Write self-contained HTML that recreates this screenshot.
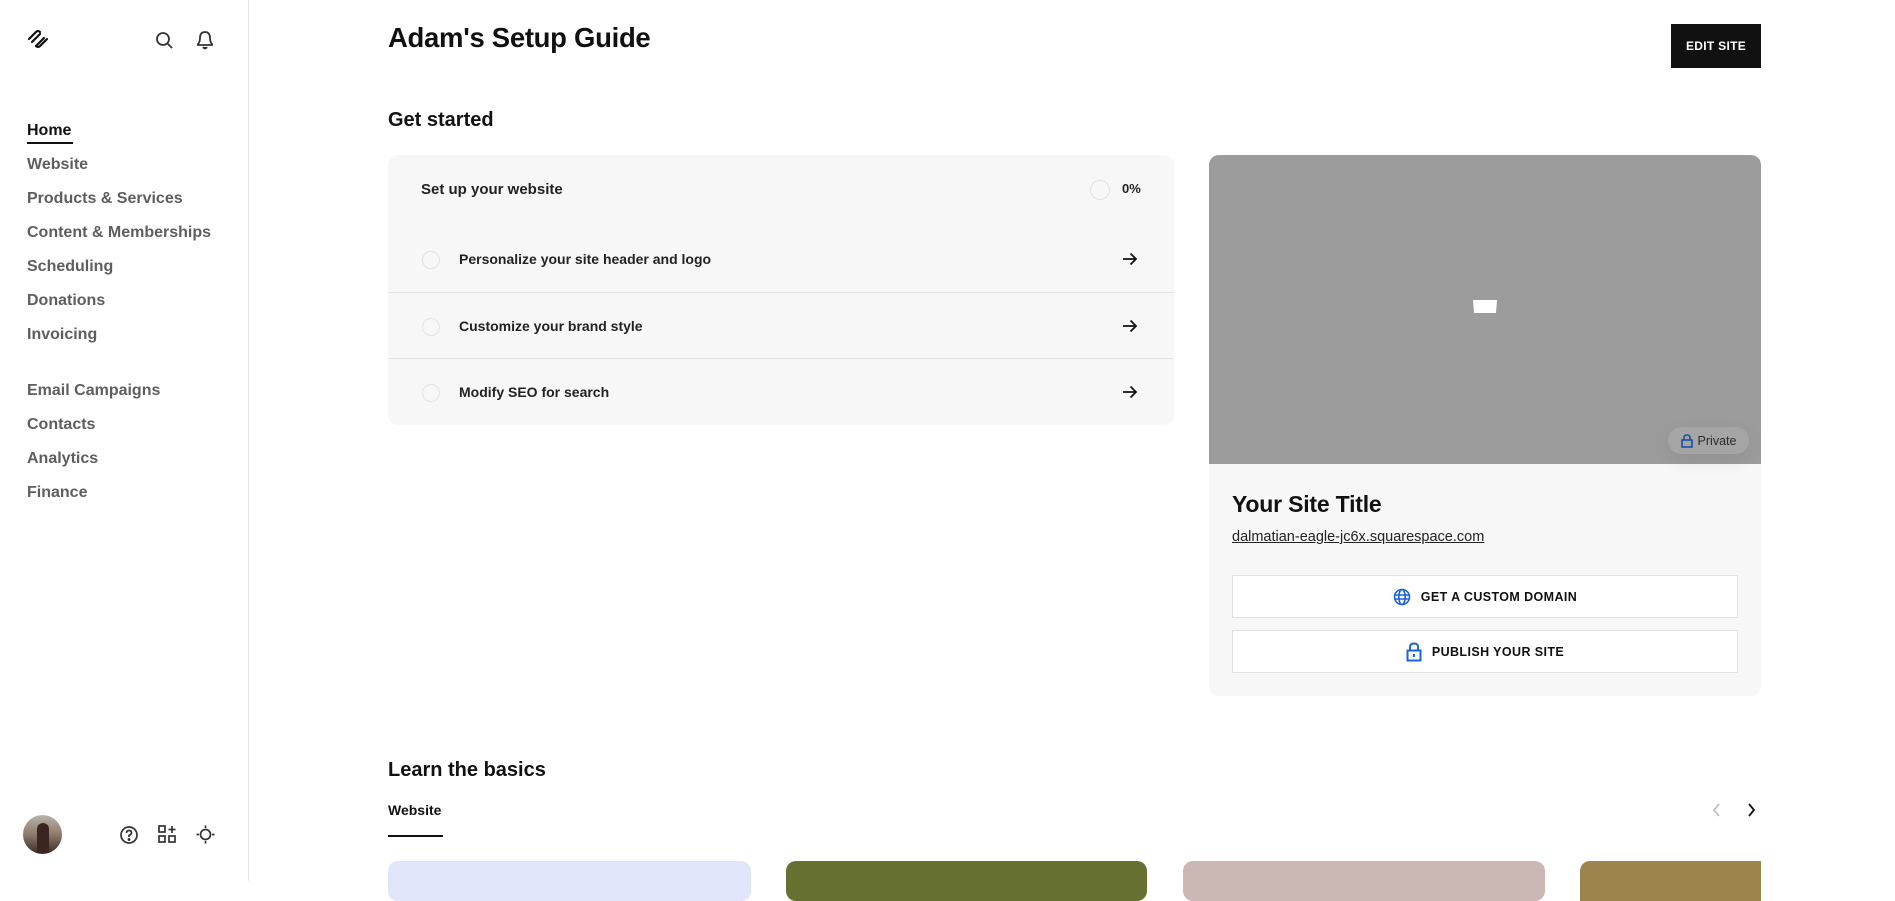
<!DOCTYPE html>
<html><head><meta charset="utf-8"><style>
*{margin:0;padding:0;box-sizing:border-box}
body{width:1895px;height:881px;overflow:hidden;background:#fff;font-family:"Liberation Sans",sans-serif;color:#111;position:relative}
.a{position:absolute}
.side{left:0;top:0;width:249px;height:881px;border-right:1px solid #e6e6e6}
.nav{left:27px;font-size:16px;font-weight:bold;color:#5e5e5e;line-height:20px}
.row{left:0;width:786px;height:67px;border-top:1px solid #e3e3e3}
.circ{width:18px;height:18px;border:1.5px solid #e2e2e2;border-radius:50%}
.rt{font-size:14px;font-weight:bold;color:#222}
.btn{left:23px;width:506px;height:43px;background:#fff;border:1px solid #e0e0e0;display:flex;align-items:center;justify-content:center;font-size:12.5px;font-weight:bold;letter-spacing:.4px;gap:10px}
</style></head><body>
<div class="a side">
<svg class="a" style="left:26px;top:29px" width="24" height="20" viewBox="0 0 24 20" fill="none" stroke="#111" stroke-width="2.2" stroke-linecap="round"><path d="M3 10 L10 3 Q12 1 14 3"/><path d="M6 13 L14 5"/><path d="M10 17 L18 9"/><path d="M10 17 Q12 19 14 17 L21 10"/></svg>
<svg class="a" style="left:155px;top:31px" width="19" height="19" viewBox="0 0 19 19" fill="none" stroke="#333" stroke-width="1.8"><circle cx="8" cy="8" r="6"/><path d="M12.5 12.5 L17 17"/></svg>
<svg class="a" style="left:195px;top:29px" width="20" height="22" viewBox="0 0 20 22" fill="none" stroke="#333" stroke-width="1.8"><path d="M3 16 L3 15 Q5 13 5 9 Q5 3 10 3 Q15 3 15 9 Q15 13 17 15 L17 16 Z"/><path d="M8 18 Q10 21 12 18" fill="#333"/></svg>
<div class="a nav" style="top:121px;color:#111">Home</div>
<div class="a" style="left:27px;top:142px;width:46px;height:2px;background:#111"></div>
<div class="a nav" style="top:155px">Website</div>
<div class="a nav" style="top:189px">Products &amp; Services</div>
<div class="a nav" style="top:223px">Content &amp; Memberships</div>
<div class="a nav" style="top:257px">Scheduling</div>
<div class="a nav" style="top:291px">Donations</div>
<div class="a nav" style="top:325px">Invoicing</div>
<div class="a nav" style="top:381px">Email Campaigns</div>
<div class="a nav" style="top:415px">Contacts</div>
<div class="a nav" style="top:449px">Analytics</div>
<div class="a nav" style="top:483px">Finance</div>
<div class="a" style="left:23px;top:815px;width:39px;height:39px;border-radius:50%;background:linear-gradient(#b9b3ac,#8d7a6b 50%,#3a2a24)"></div>
<div class="a" style="left:37px;top:823px;width:12px;height:30px;border-radius:6px 6px 0 0;background:#3a2520"></div>
<svg class="a" style="left:119px;top:825px" width="20" height="20" viewBox="0 0 20 20" fill="none" stroke="#333" stroke-width="1.7"><circle cx="10" cy="10" r="8"/><path d="M7.5 8 Q7.5 5.5 10 5.5 Q12.5 5.5 12.5 7.8 Q12.5 9.5 10 10.5 L10 12"/><circle cx="10" cy="14.5" r=".6" fill="#333"/></svg>
<svg class="a" style="left:157px;top:824px" width="21" height="21" viewBox="0 0 21 21" fill="none" stroke="#333" stroke-width="1.7"><rect x="2" y="2" width="6" height="6"/><rect x="2" y="12" width="6" height="6"/><rect x="12" y="12" width="6" height="6"/><path d="M15 2 V9 M11.5 5.5 H18.5"/></svg>
<svg class="a" style="left:195px;top:824px" width="21" height="21" viewBox="0 0 21 21" fill="none" stroke="#333" stroke-width="1.7"><circle cx="10.5" cy="10.5" r="5"/><path d="M10.5 1.5V4M10.5 17V19.5M1.5 10.5H4M17 10.5H19.5"/></svg>
</div>

<div class="a" style="left:388px;top:22px;font-size:27.5px;font-weight:bold;letter-spacing:-.3px">Adam's Setup Guide</div>
<div class="a" style="left:1671px;top:24px;width:90px;height:44px;background:#111;color:#fff;font-size:12px;font-weight:bold;display:flex;align-items:center;justify-content:center;letter-spacing:.3px">EDIT SITE</div>
<div class="a" style="left:388px;top:109px;font-size:20px;font-weight:bold">Get started</div>

<div class="a" style="left:388px;top:155px;width:786px;height:270px;background:#f7f7f7;border-radius:10px">
<div class="a rt" style="left:33px;top:26px;font-size:15px">Set up your website</div>
<div class="a circ" style="left:702px;top:25px;width:20px;height:20px"></div>
<div class="a rt" style="left:734px;top:26px;font-size:13px">0%</div>
<div class="a row" style="top:70px;border-top:none"></div>
<div class="a circ" style="left:34px;top:96px"></div><div class="a rt" style="left:71px;top:96px">Personalize your site header and logo</div>
<div class="a row" style="top:137px"></div>
<div class="a circ" style="left:34px;top:163px"></div><div class="a rt" style="left:71px;top:163px">Customize your brand style</div>
<div class="a row" style="top:203px;border-bottom:none;height:67px"></div>
<div class="a circ" style="left:34px;top:229px"></div><div class="a rt" style="left:71px;top:229px">Modify SEO for search</div>
<svg class="a" style="left:734px;top:96px" width="16" height="16" viewBox="0 0 16 16" fill="none" stroke="#111" stroke-width="1.8"><path d="M1 8H14M8.5 2.5L14 8L8.5 13.5"/></svg>
<svg class="a" style="left:734px;top:163px" width="16" height="16" viewBox="0 0 16 16" fill="none" stroke="#111" stroke-width="1.8"><path d="M1 8H14M8.5 2.5L14 8L8.5 13.5"/></svg>
<svg class="a" style="left:734px;top:229px" width="16" height="16" viewBox="0 0 16 16" fill="none" stroke="#111" stroke-width="1.8"><path d="M1 8H14M8.5 2.5L14 8L8.5 13.5"/></svg>
</div>

<div class="a" style="left:1209px;top:155px;width:552px;height:541px;background:#f7f7f7;border-radius:10px;overflow:hidden">
<div class="a" style="left:0;top:0;width:552px;height:309px;background:#9c9c9c"></div>
<svg class="a" style="left:264px;top:145px" width="24" height="14" viewBox="0 0 24 14"><path d="M0 0H24L23 13H1Z" fill="#fff"/></svg>
<div class="a" style="left:459px;top:272px;width:81px;height:27px;border-radius:14px;background:#a5a5a5;box-shadow:0 6px 20px rgba(0,0,0,.08);display:flex;align-items:center;justify-content:center;gap:5px;font-size:12.5px;color:#2b2b2b">
<svg width="12" height="14" viewBox="0 0 12 14" fill="none" stroke="#1a4fa8" stroke-width="1.6"><rect x="1" y="6" width="10" height="7"/><path d="M3 6V4Q3 1 6 1Q9 1 9 4V6"/></svg>Private</div>
<div class="a" style="left:23px;top:336px;font-size:23px;font-weight:bold;letter-spacing:-.2px">Your Site Title</div>
<div class="a" style="left:23px;top:374px;font-size:14.5px;text-decoration:underline;color:#222">dalmatian-eagle-jc6x.squarespace.com</div>
<div class="a btn" style="top:420px"><svg width="18" height="18" viewBox="0 0 18 18" fill="none" stroke="#1b64d8" stroke-width="1.6"><circle cx="9" cy="9" r="7.5"/><ellipse cx="9" cy="9" rx="3.2" ry="7.5"/><path d="M1.5 7H16.5M1.5 11H16.5"/></svg>GET A CUSTOM DOMAIN</div>
<div class="a btn" style="top:475px"><svg width="16" height="20" viewBox="0 0 16 20" fill="none" stroke="#1b64d8" stroke-width="2"><rect x="1.5" y="8.5" width="13" height="10"/><path d="M4 8.5V5Q4 1.5 8 1.5Q12 1.5 12 5V8.5"/><path d="M8 12V15"/></svg>PUBLISH YOUR SITE</div>
</div>

<div class="a" style="left:388px;top:759px;font-size:20px;font-weight:bold">Learn the basics</div>
<div class="a" style="left:388px;top:802px;font-size:14px;font-weight:bold">Website</div>
<div class="a" style="left:388px;top:835px;width:55px;height:2px;background:#111"></div>
<svg class="a" style="left:1711px;top:803px" width="12" height="14" viewBox="0 0 12 14" fill="none" stroke="#bbb" stroke-width="1.6"><path d="M8 1L3 7L8 13"/></svg>
<svg class="a" style="left:1745px;top:803px" width="12" height="14" viewBox="0 0 12 14" fill="none" stroke="#111" stroke-width="1.8"><path d="M4 1L9 7L4 13"/></svg>
<div class="a" style="left:388px;top:861px;width:363px;height:40px;background:#e1e5fa;border-radius:10px"></div>
<div class="a" style="left:786px;top:861px;width:361px;height:40px;background:#667030;border-radius:10px"></div>
<div class="a" style="left:1183px;top:861px;width:362px;height:40px;background:#cbb8b5;border-radius:10px"></div>
<div class="a" style="left:1580px;top:861px;width:181px;height:40px;background:#9b844d;border-radius:10px 0 0 0"></div>
</body></html>
